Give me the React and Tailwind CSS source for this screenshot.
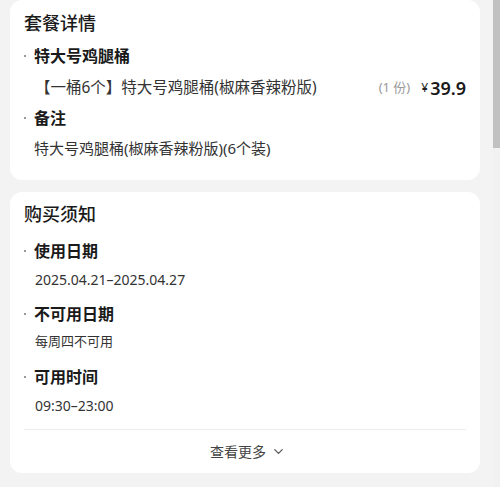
import { ChevronDown } from "lucide-react";

function Bullet({ title }) {
  return (
    <div className="flex items-center h-[24px]">
      <span className="w-[10px] flex items-center">
        <span className="w-[2px] h-[2px] rounded-full bg-[#777]" />
      </span>
      <span className="text-[16px] font-semibold text-[#1a1a1a] leading-none">{title}</span>
    </div>
  );
}

function App() {
  return (
    <div
      className="flex w-[500px] h-[487px] bg-[#f3f3f3] overflow-hidden"
      style={{ fontFamily: '"Noto Sans", "Noto Sans CJK SC", sans-serif' }}
    >
      <div className="flex-1 flex flex-col pl-[10px] pr-[13px] gap-[12px]">
        <div className="bg-white rounded-[12px] px-[14px] pt-[11px] h-[180px]">
          <h2 className="text-[18px] font-medium text-[#1a1a1a] leading-[24px]">套餐详情</h2>
          <div className="mt-[9px]">
            <Bullet title="特大号鸡腿桶" />
          </div>
          <div className="flex items-center mt-[8px] h-[24px]">
            <span className="text-[15.5px] text-[#333] ml-[11px]">【一桶6个】特大号鸡腿桶(椒麻香辣粉版)</span>
            <span className="ml-auto text-[13px] text-[#999]">(1 份)</span>
            <span className="ml-[11px] text-[12px] text-[#222]">¥</span>
            <span className="ml-[2px] text-[18px] font-semibold text-[#1a1a1a]">39.9</span>
          </div>
          <div className="mt-[6px]">
            <Bullet title="备注" />
          </div>
          <div className="mt-[6px] ml-[10px] h-[24px] flex items-center text-[15px] text-[#333]">
            特大号鸡腿桶(椒麻香辣粉版)(6个装)
          </div>
        </div>

        <div className="bg-white rounded-[12px] px-[14px] pt-[10px] h-[281px] flex flex-col">
          <h2 className="text-[18px] font-medium text-[#1a1a1a] leading-[24px]">购买须知</h2>
          <div className="mt-[13px]">
            <Bullet title="使用日期" />
          </div>
          <div className="ml-[11px] mt-[4px] h-[24px] flex items-center text-[14px] text-[#333]">2025.04.21–2025.04.27</div>
          <div className="mt-[11px]">
            <Bullet title="不可用日期" />
          </div>
          <div className="ml-[11px] mt-[4px] h-[24px] flex items-center text-[13px] text-[#333]">每周四不可用</div>
          <div className="mt-[11px]">
            <Bullet title="可用时间" />
          </div>
          <div className="ml-[11px] mt-[4px] h-[24px] flex items-center text-[14px] text-[#333]">09:30–23:00</div>
          <div className="mt-[12px] border-t border-[#ececec] flex items-center justify-center h-[44px] gap-[5px] pl-[6px] text-[14px] text-[#444]">
            <span>查看更多</span>
            <ChevronDown size={15} strokeWidth={2} className="text-[#555]" />
          </div>
        </div>
      </div>
      <div className="w-[7px] bg-[#f1f1f1] flex flex-col">
        <div className="h-[148px] bg-[#c1c1c1]" />
      </div>
    </div>
  );
}

export default App;
